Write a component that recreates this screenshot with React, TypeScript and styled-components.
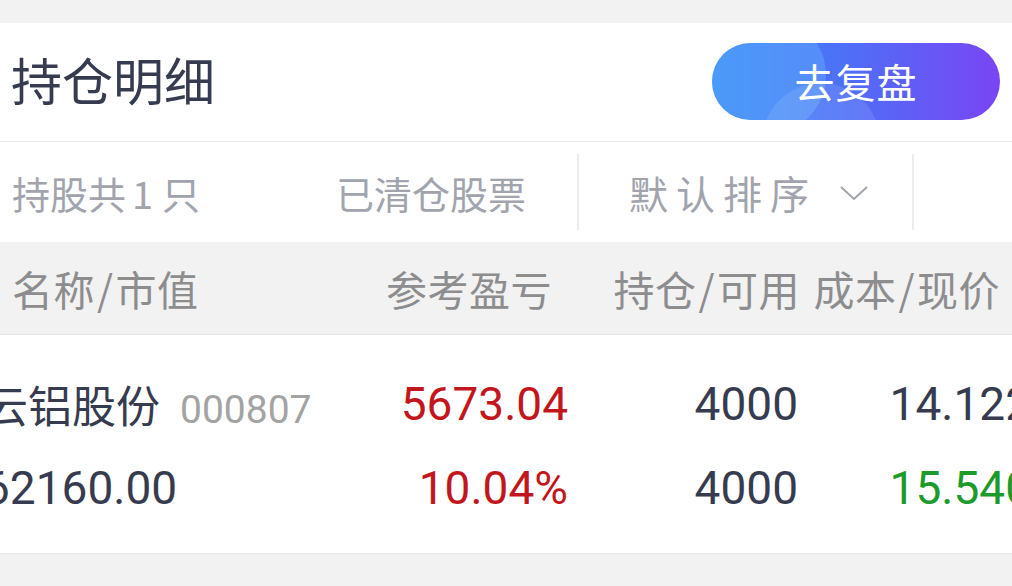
import React from "react";
import styled, { createGlobalStyle } from "styled-components";

const GlobalStyle = createGlobalStyle`
  html, body {
    margin: 0;
    padding: 0;
    background: #f2f2f2;
  }
  body {
    font-family: Roboto, "Noto Sans CJK SC", sans-serif;
  }
`;

const Page = styled.div`
  width: 1012px;
  height: 586px;
  padding-top: 23px;
  box-sizing: border-box;
  overflow: hidden;
  background: #f2f2f2;
`;

const Card = styled.section`
  background: #fff;
  overflow: hidden;
  border-bottom: 1px solid #e6e6ea;
`;

const TitleBar = styled.div`
  height: 119px;
  box-sizing: border-box;
  display: flex;
  align-items: center;
  justify-content: space-between;
  padding: 0 12px 0 11px;
  border-bottom: 1px solid #e7e8ec;
`;

const Title = styled.h1`
  margin: -6px 0 0 0;
  font-size: 51px;
  font-weight: 400;
  color: #363b4f;
  font-family: "Noto Sans CJK SC", sans-serif;
`;

const ReviewButton = styled.button`
  position: relative;
  overflow: hidden;
  width: 288px;
  height: 77px;
  margin-top: -2px;
  border: 0;
  border-radius: 39px;
  background: linear-gradient(90deg, #3987f6 0%, #4d70f6 45%, #7a45f4 100%);
  color: #fff;
  font-size: 40px;
  font-family: "Noto Sans CJK SC", sans-serif;
  letter-spacing: 1px;
  padding: 0;

  &::before {
    content: "";
    position: absolute;
    left: -6px;
    top: -28px;
    width: 120px;
    height: 120px;
    border-radius: 50%;
    background: rgba(110, 190, 255, 0.35);
  }
  &::after {
    content: "";
    position: absolute;
    left: 50px;
    top: 40px;
    width: 118px;
    height: 118px;
    border-radius: 50%;
    background: rgba(255, 255, 255, 0.1);
  }
  span {
    position: relative;
    z-index: 1;
  }
`;

const FilterBar = styled.div`
  height: 100px;
  display: flex;
  align-items: center;
  font-family: "Noto Sans CJK SC", sans-serif;
  font-size: 38px;
  color: #a1a4ad;
`;

const FilterItem = styled.div<{ $w: number; $pl: number }>`
  width: ${(p) => p.$w}px;
  padding-left: ${(p) => p.$pl}px;
  box-sizing: border-box;
  display: flex;
  align-items: center;
`;

const Digit = styled.span`
  margin: 0 9px 0 6px;
`;

const Divider = styled.div`
  width: 2px;
  height: 76px;
  background: #ececef;
  flex-shrink: 0;
`;

const SortLabel = styled.span`
  font-size: 39px;
  letter-spacing: 8px;
`;

const HeaderRow = styled.div`
  height: 93px;
  box-sizing: border-box;
  display: grid;
  grid-template-columns: 340px 200px 248px 200px;
  align-items: center;
  padding-left: 12px;
  background: #f2f2f2;
  border-bottom: 1px solid #e4e4e8;
  font-family: "Noto Sans CJK SC", sans-serif;
  font-size: 41px;
  color: #8d8d8f;
  white-space: nowrap;
`;

const HeadCell = styled.div<{ $right?: boolean }>`
  text-align: ${(p) => (p.$right ? "right" : "left")};
  letter-spacing: 0.5px;
`;

const Slash = styled.span`
  margin: 0 2px;
`;

const DataRow = styled.div`
  height: 218px;
  box-sizing: border-box;
  margin-left: -16px;
  padding-top: 27px;
  display: grid;
  grid-template-columns: 356px 228px 230px 233px;
  grid-auto-rows: 84px;
  align-items: center;
  width: 1047px;
  white-space: nowrap;
`;

const NameCell = styled.div`
  display: flex;
  align-items: baseline;
  gap: 20px;
`;

const StockName = styled.span`
  font-family: "Noto Sans CJK SC", sans-serif;
  font-size: 44px;
  color: #363b4f;
`;

const StockCode = styled.span`
  font-size: 39px;
  color: #a3a3a3;
`;

const Num = styled.div<{ $color?: string; $right?: boolean }>`
  font-size: 46px;
  color: ${(p) => p.$color || "#363b4f"};
  text-align: ${(p) => (p.$right ? "right" : "left")};
`;

const Chevron = styled.svg`
  margin-left: 22px;
  margin-top: 2px;
`;

const RED = "#c3161c";
const GREEN = "#1c9a2a";

export default function App() {
  return (
    <Page>
      <GlobalStyle />
      <Card>
        <TitleBar>
          <Title>持仓明细</Title>
          <ReviewButton>
            <span>去复盘</span>
          </ReviewButton>
        </TitleBar>
        <FilterBar>
          <FilterItem $w={336} $pl={12}>
            持股共<Digit>1</Digit>只
          </FilterItem>
          <FilterItem $w={241} $pl={0}>已清仓股票</FilterItem>
          <Divider />
          <FilterItem $w={333} $pl={50}>
            <SortLabel>默认排序</SortLabel>
            <Chevron width="30" height="18" viewBox="0 0 30 18">
              <path d="M2 3 L15 15 L28 3" fill="none" stroke="#a1a4ad" strokeWidth="2" />
            </Chevron>
          </FilterItem>
          <Divider />
        </FilterBar>
        <HeaderRow>
          <HeadCell>名称<Slash>/</Slash>市值</HeadCell>
          <HeadCell $right>参考盈亏</HeadCell>
          <HeadCell $right>持仓<Slash>/</Slash>可用</HeadCell>
          <HeadCell $right>成本<Slash>/</Slash>现价</HeadCell>
        </HeaderRow>
        <DataRow>
          <NameCell>
            <StockName>云铝股份</StockName>
            <StockCode>000807</StockCode>
          </NameCell>
          <Num $color={RED} $right>5673.04</Num>
          <Num $right>4000</Num>
          <Num $right>14.122</Num>
          <Num>62160.00</Num>
          <Num $color={RED} $right>10.04%</Num>
          <Num $right>4000</Num>
          <Num $color={GREEN} $right>15.540</Num>
        </DataRow>
      </Card>
    </Page>
  );
}
